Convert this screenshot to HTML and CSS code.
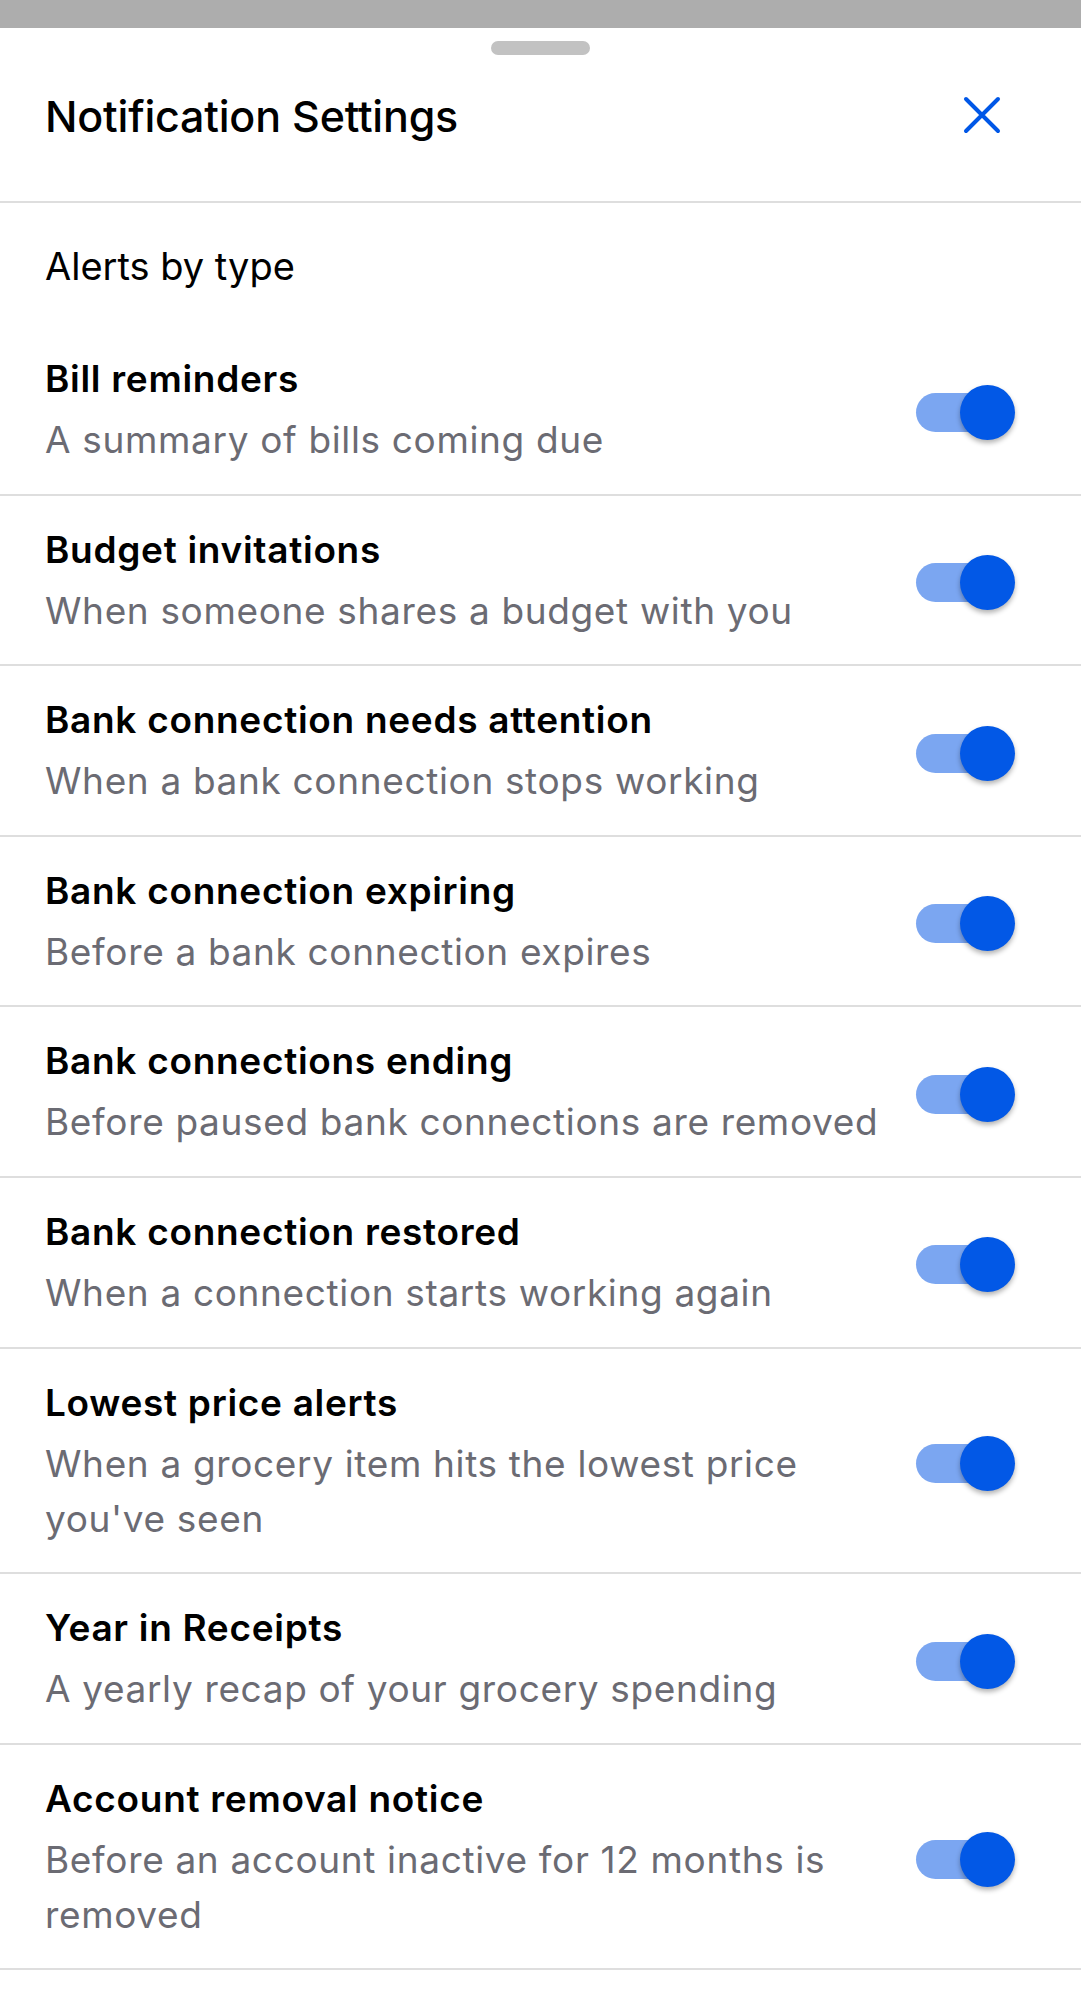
FILE: index.html
```html
<!DOCTYPE html>
<html lang="en">
<head>
  <meta charset="UTF-8">
  <title>Notification Settings</title>
  <link rel="stylesheet" href="styles.css">
</head>
<body>
  <div class="topbar"></div>

  <div class="sheet">
    <div class="grabber"></div>

    <!-- Header -->
    <div class="header">
      <h1 class="title">Notification Settings</h1>
      <button class="close" aria-label="Close">
        <svg width="38" height="38" viewBox="0 0 38 38">
          <path d="M3 3 L35 35 M35 3 L3 35" stroke="#0057e7" stroke-width="4" stroke-linecap="round" fill="none"/>
        </svg>
      </button>
    </div>

    <div class="section-label">Alerts by type</div>

    <!-- Alert rows -->
    <div class="row">
      <div class="row-text">
        <div class="row-title">Bill reminders</div>
        <div class="row-desc">A summary of bills coming due</div>
      </div>
      <div class="switch"><span class="track"></span><span class="knob"></span></div>
    </div>

    <div class="row">
      <div class="row-text">
        <div class="row-title">Budget invitations</div>
        <div class="row-desc">When someone shares a budget with you</div>
      </div>
      <div class="switch"><span class="track"></span><span class="knob"></span></div>
    </div>

    <div class="row">
      <div class="row-text">
        <div class="row-title">Bank connection needs attention</div>
        <div class="row-desc">When a bank connection stops working</div>
      </div>
      <div class="switch"><span class="track"></span><span class="knob"></span></div>
    </div>

    <div class="row">
      <div class="row-text">
        <div class="row-title">Bank connection expiring</div>
        <div class="row-desc">Before a bank connection expires</div>
      </div>
      <div class="switch"><span class="track"></span><span class="knob"></span></div>
    </div>

    <div class="row">
      <div class="row-text">
        <div class="row-title">Bank connections ending</div>
        <div class="row-desc">Before paused bank connections are removed</div>
      </div>
      <div class="switch"><span class="track"></span><span class="knob"></span></div>
    </div>

    <div class="row">
      <div class="row-text">
        <div class="row-title">Bank connection restored</div>
        <div class="row-desc">When a connection starts working again</div>
      </div>
      <div class="switch"><span class="track"></span><span class="knob"></span></div>
    </div>

    <div class="row">
      <div class="row-text">
        <div class="row-title">Lowest price alerts</div>
        <div class="row-desc">When a grocery item hits the lowest price you've seen</div>
      </div>
      <div class="switch"><span class="track"></span><span class="knob"></span></div>
    </div>

    <div class="row">
      <div class="row-text">
        <div class="row-title">Year in Receipts</div>
        <div class="row-desc">A yearly recap of your grocery spending</div>
      </div>
      <div class="switch"><span class="track"></span><span class="knob"></span></div>
    </div>

    <div class="row">
      <div class="row-text">
        <div class="row-title">Account removal notice</div>
        <div class="row-desc">Before an account inactive for 12 months is removed</div>
      </div>
      <div class="switch"><span class="track"></span><span class="knob"></span></div>
    </div>
  </div>
</body>
</html>
```

FILE: styles.css
```css
body {
  margin: 0;
  font-family: Inter, "Noto Sans", sans-serif;
  background-color: #fff;
  color: #000;
}

/* Dimmed area above the sheet */
.topbar {
  height: 28px;
  background-color: #adadad;
}

.grabber {
  width: 99px;
  height: 14px;
  margin: 13px auto 0;
  border-radius: 7px;
  background-color: #c2c2c2;
}

/* Header */
.header {
  display: flex;
  align-items: center;
  justify-content: space-between;
  padding: 28px 80px 51px 45px;
  border-bottom: 2px solid #dedede;
}
.title {
  margin: 0;
  font-size: 43px;
  font-weight: 500;
  line-height: 67px;
  letter-spacing: -0.2px;
}
.close {
  display: flex;
  padding: 0;
  margin-top: -3px;
  border: 0;
  background: none;
}

.section-label {
  padding: 40px 45px 36px;
  font-size: 38px;
  line-height: 46px;
}

/* Rows */
.row {
  display: flex;
  align-items: center;
  padding: 28px 66px 26.6px 45px;
  border-bottom: 2px solid #dedede;
}
.row-text {
  flex: 1;
  min-width: 0;
  padding-right: 16px;
}
.row-title {
  font-size: 37px;
  font-weight: 600;
  line-height: 52px;
  letter-spacing: 0.7px;
}
.row-desc {
  margin-top: 7px;
  font-size: 37px;
  line-height: 55px;
  letter-spacing: 0.65px;
  color: #6b6b73;
}

/* Switch */
.switch {
  position: relative;
  flex: none;
  width: 99px;
  height: 55px;
  margin-top: 4px;
}
.track {
  position: absolute;
  left: 0;
  top: 8px;
  width: 84px;
  height: 39px;
  border-radius: 20px;
  background-color: #7ba6f1;
}
.knob {
  position: absolute;
  right: 0;
  top: 0;
  width: 55px;
  height: 55px;
  border-radius: 50%;
  background-color: #0258e6;
  box-shadow: 0 3px 5px rgba(0, 0, 0, 0.3);
}
```
